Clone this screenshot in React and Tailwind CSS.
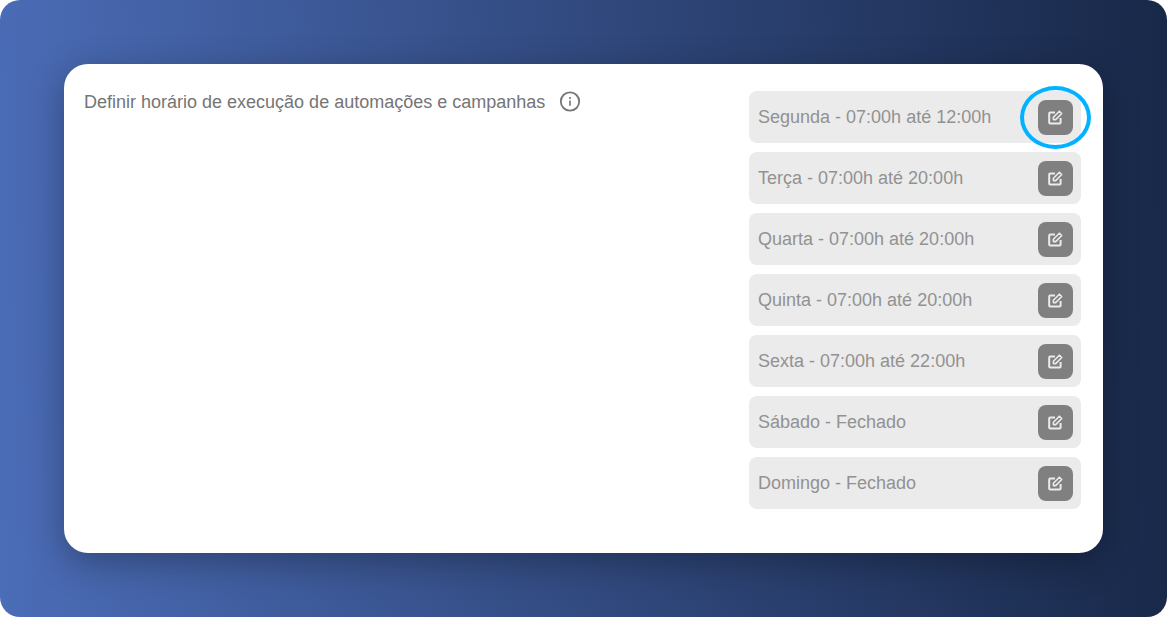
import React from 'react';

const schedule = [
  { day: 'Segunda', hours: '07:00h até 12:00h', highlighted: true },
  { day: 'Terça', hours: '07:00h até 20:00h' },
  { day: 'Quarta', hours: '07:00h até 20:00h' },
  { day: 'Quinta', hours: '07:00h até 20:00h' },
  { day: 'Sexta', hours: '07:00h até 22:00h' },
  { day: 'Sábado', hours: 'Fechado' },
  { day: 'Domingo', hours: 'Fechado' },
];

const InfoIcon = () => (
  <svg className="size-[22px]" viewBox="0 0 22 22" fill="none" stroke="currentColor" strokeWidth="1.8">
    <circle cx="11" cy="10.5" r="9.2" />
    <path d="M11 9.6v5.2M11 6v1.9" strokeWidth="1.6" />
  </svg>
);

const EditIcon = () => (
  <svg className="size-[15px]" viewBox="0 0 15 15" fill="none" stroke="currentColor" strokeWidth="2" strokeLinejoin="round">
    <path d="M7 2.6H2.2Q1.2 2.6 1.2 3.6v8.8q0 1 1 1h9.4q1 0 1-1V8" />
    <path d="M5.4 7.3 11.4 1.2l2.3 2.3-6 6.1H5.4z" strokeWidth="1.6" />
  </svg>
);

const ScheduleRow = ({ day, hours, highlighted }) => (
  <li className="flex h-[52px] items-center justify-between rounded-lg bg-[#ebebeb] pr-2 pl-[9px] text-[#929292]">
    <span>
      {day} - {hours}
    </span>
    <div className="relative">
      <button
        type="button"
        aria-label={`Editar ${day}`}
        className="flex size-[35px] items-center justify-center rounded-lg bg-[#808080] text-[#ebebeb] hover:bg-[#707070]"
      >
        <EditIcon />
      </button>
      {highlighted && (
        <span className="pointer-events-none absolute -inset-x-[18px] -inset-y-[14px] rounded-[50%] border-4 border-[#00b2ff]" />
      )}
    </div>
  </li>
);

const App = () => {
  return (
    <div className="bg-white">
      <main className="min-h-screen rounded-[20px] bg-[linear-gradient(88deg,#4b6cb7,#182848)] p-16 font-['Liberation_Sans',Arial,sans-serif] text-[18px] leading-[22px]">
        <section className="flex items-start justify-between gap-6 rounded-3xl bg-white pt-[27px] pr-[22px] pb-11 pl-5 shadow-[0_10px_36px_rgba(0,0,0,0.3)]">
          {/* Title */}
          <div className="flex items-center gap-3.5 text-[#757575]">
            <h1>Definir horário de execução de automações e campanhas</h1>
            <button type="button" aria-label="Mais informações">
              <InfoIcon />
            </button>
          </div>

          {/* Days of the week */}
          <ul className="flex w-[332px] shrink-0 flex-col gap-[9px]">
            {schedule.map((item) => (
              <ScheduleRow key={item.day} {...item} />
            ))}
          </ul>
        </section>
      </main>
    </div>
  );
};

export default App;
